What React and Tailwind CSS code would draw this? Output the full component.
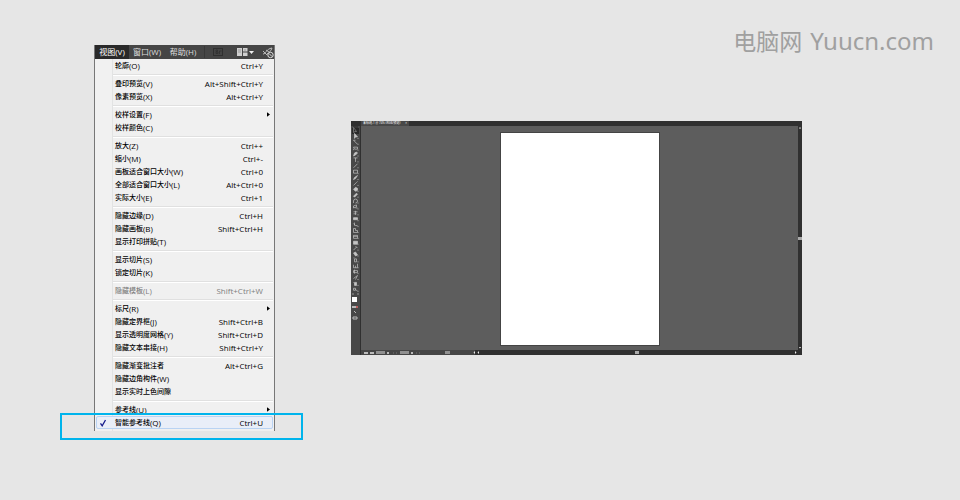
import React from 'react';

const groups = [
  [['轮廓', '(O)', 'Ctrl+Y']],
  [['叠印预览', '(V)', 'Alt+Shift+Ctrl+Y'], ['像素预览', '(X)', 'Alt+Ctrl+Y']],
  [['校样设置', '(F)', '', 'sub'], ['校样颜色', '(C)', '']],
  [
    ['放大', '(Z)', 'Ctrl++'],
    ['缩小', '(M)', 'Ctrl+-'],
    ['画板适合窗口大小', '(W)', 'Ctrl+0'],
    ['全部适合窗口大小', '(L)', 'Alt+Ctrl+0'],
    ['实际大小', '(E)', 'Ctrl+1'],
  ],
  [['隐藏边缘', '(D)', 'Ctrl+H'], ['隐藏画板', '(B)', 'Shift+Ctrl+H'], ['显示打印拼贴', '(T)', '']],
  [['显示切片', '(S)', ''], ['锁定切片', '(K)', '']],
  [['隐藏模板', '(L)', 'Shift+Ctrl+W', 'disabled']],
  [
    ['标尺', '(R)', '', 'sub'],
    ['隐藏定界框', '(J)', 'Shift+Ctrl+B'],
    ['显示透明度网格', '(Y)', 'Shift+Ctrl+D'],
    ['隐藏文本串接', '(H)', 'Shift+Ctrl+Y'],
  ],
  [['隐藏渐变批注者', '', 'Alt+Ctrl+G'], ['隐藏边角构件', '(W)', ''], ['显示实时上色间隙', '', '']],
  [['参考线', '(U)', '', 'sub'], ['智能参考线', '(Q)', 'Ctrl+U', 'checked']],
];

function MenuItem({ label, mnemonic, shortcut, kind }) {
  const checked = kind === 'checked';
  return (
    <button
      type="button"
      disabled={kind === 'disabled'}
      className={`flex h-[13px] w-full items-center whitespace-nowrap text-left text-[8px] leading-[13px] ${
        kind === 'disabled' ? 'text-[#808080]' : 'text-black'
      } ${checked ? 'rounded-[2px] bg-[#e9eef8] outline outline-1 -outline-offset-1 outline-[#b9d3f3]' : ''}`}
    >
      <span className="w-[19px] pl-[3px]">
        {checked && (
          <svg viewBox="0 0 8 8" className="size-2" fill="none" stroke="#151b8c" strokeWidth="1.3">
            <path d="M1.5 4.3 3.2 6.8 6.5 1" />
          </svg>
        )}
      </span>
      <span className="flex grow">
        <span className="text-[7px] font-medium">{label}</span>
        <span>{mnemonic}</span>
      </span>
      <span>{shortcut}</span>
      <span className="flex w-[10px] justify-center">
        {kind === 'sub' && (
          <svg viewBox="0 0 4 6" className="h-[5px] w-[3px]" fill="#000">
            <path d="M0 0 4 3 0 6Z" />
          </svg>
        )}
      </span>
    </button>
  );
}

function ViewMenu() {
  return (
    <section className="relative w-[181px] shrink-0 border-x border-[#777]">
      <nav className="flex h-[14px] items-center bg-[#454545] text-[8px] leading-[14px] text-[#dedede]">
        <button type="button" className="h-full w-[34px] whitespace-nowrap bg-[#292929] text-white">视图(V)</button>
        <button type="button" className="h-full w-[36px] whitespace-nowrap">窗口(W)</button>
        <button type="button" className="h-full w-[36px] whitespace-nowrap">帮助(H)</button>
        <svg viewBox="0 0 73 14" className="h-[14px] w-[73px]" fill="none">
          <path d="M3.5 1v12" stroke="#383838" />
          <rect x="12.5" y="3.5" width="9" height="7" stroke="#303030" />
          <path d="M15 5h1.500v1.500H15zM15 7h2v1.500h-2zM18.500 9V6h2" stroke="#303030" strokeWidth=".8" />
          <path d="M36 3h5v8h-5zM42 3h4.500v3.500h-4.500zM42 7.500h4.500v3.500h-4.500z" fill="#d0d0d0" />
          <path d="M37 5h3M37 7h3M43 5h2" stroke="#777" strokeWidth=".6" />
          <path d="M48 6h5l-2.500 3z" fill="#eee" />
          <path d="M62 9c3 0 3-5 9-6-1 3-3 5-5 6M62 6l4 4M65 5l3 2" stroke="#bbb" />
          <circle cx="69.500" cy="10" r="2.700" fill="#444" stroke="#ddd" />
          <path d="m68 8.500 3 3" stroke="#ddd" />
        </svg>
      </nav>
      <div className="bg-[linear-gradient(90deg,#f1f1f1_17px,#e2e3e3_17px,#e2e3e3_18px,#f0f0f0_18px)] px-px pb-[2px]">
        {groups.map((items, i) => (
          <React.Fragment key={i}>
            {i > 0 && <hr className="my-[2px] ml-[17px] h-px border-0 bg-[#e0e0e0] shadow-[0_1px_0_#fff]" />}
            {items.map(([label, mnemonic, shortcut, kind]) => (
              <MenuItem key={label} label={label} mnemonic={mnemonic} shortcut={shortcut} kind={kind} />
            ))}
          </React.Fragment>
        ))}
      </div>
      <div className="pointer-events-none absolute -bottom-[9px] -left-[35px] h-[27px] w-[243px] border-2 border-[#00b4ec]" />
    </section>
  );
}

const tools = [
  'M1 0v5l1.500-1 1.500 0z', 'M2 0v5l1-1.500h2z', 'M1 1l4 4M1 1h2', 'M1 2h4v2H2zM1 4v1',
  'M1 5l1-3 2-1 1 1-2 2z', 'M1 1h4M3 1v4', 'M1 5l4-4', 'M1 1.500h4v3H1z',
  'M1 5l1-2 3-2-2 3z', 'M1 5l3-3 1-1', 'M1 3l2-2 2 1v2l-2 1z', 'M1 4l3-3 1 1-3 3z',
  'M1 3a2 2 0 1 1 2 2M1 3v2', 'M1 4V2l3-1v2zM3 4h2', 'M1 2h4M1 4h3M3 1v4', 'M1 2h4v2H1z',
  'M1 2l2 2 2 0M2 1v3', 'M1 1v4h4V3H3V1z', 'M1 2h4v3H1zM1 3h4', 'M1 2h4v3H1z',
  'M1 5l3-3M3 1l2 2', 'M1 2l2-1 2 3-2 1z', 'M2 2h2v3H2zM1 1h1', 'M1 5V2M3 5V3M5 5V1M1 5h4',
  'M1 2h4v2H1zM2 1v4', 'M1 4l4-3-2 4', 'M2 2h2v3H2zM1 2l1 1', 'M3 3l2 2M1 2h2v2H1z',
];
const filled = [1, 4, 8, 10, 11, 15, 19, 21, 26];

function Editor() {
  return (
    <section className="flex h-[234px] w-[451px] shrink-0 bg-[#333]">
      <aside className="flex w-[10px] flex-col items-center border-r border-[#303030] bg-[#484848]">
        <div className="h-[5px] w-full bg-[#303030]" />
        <svg viewBox="0 0 9 196" className="h-[196px] w-[9px]" fill="none">
          <path d="M2 1h5" stroke="#292929" />
          <rect x="1" y="2" width="7" height="6" fill="#292929" />
          {tools.map((d, i) => (
            <g key={i} transform={`translate(1.500 ${1.5 + i * 5.88})`}>
              <path d={d} stroke={i === 0 ? '#888' : '#c4c4c4'} strokeWidth=".7" fill={filled.includes(i) ? '#c4c4c4' : 'none'} />
              {i > 0 && <path d="M5 5h1" stroke="#aaa" />}
            </g>
          ))}
          <path d="M1 168h2M6 168h2" stroke="#999" />
          <rect x="1" y="171" width="5" height="5" fill="#fff" />
          <path d="M1 181h4" stroke="#ddd" strokeWidth="1.500" />
          <path d="M5 181h2" stroke="#d66" strokeWidth="1.500" />
          <path d="M3 185l2 2M2 191h4v2H2z" stroke="#bbb" />
        </svg>
      </aside>
      <div className="flex min-w-0 grow flex-col">
        <header className="flex h-[5px] bg-[#303030]">
          <div className="flex w-[48px] items-center justify-between overflow-hidden whitespace-nowrap bg-[#484848] px-[2px] text-[3px] leading-[5px] text-white">
            <span>未标题-1 @ 74% (RGB/预览)</span>
            <span>×</span>
          </div>
        </header>
        <div className="flex min-h-0 grow">
          <main className="flex grow justify-center bg-[#5d5d5d] pl-px pt-[6px]">
            <div className="h-[214px] w-[160px] border border-[#444] bg-white" />
          </main>
          <svg viewBox="0 0 4 224" className="h-[224px] w-[4px] bg-[#303030]">
            <path d="M1 2.500 2 1l1 1.500zM1 221h2l-1 1.500z" fill="#fff" />
            <path d="M0 111h4v3H0z" fill="#aaa" />
          </svg>
        </div>
        <footer className="h-[5px] bg-[#303030]">
          <svg viewBox="0 0 441 5" className="h-[5px] w-full" fill="none">
            <path d="M0 0h114v5H0z" fill="#454545" />
            <path d="M3 3h4M9 3h4M26 3h2M50 3h2" stroke="#bbb" strokeWidth="2" />
            <path d="M15 1h9v3h-9zM39 1h9v3h-9zM84 1h5v3h-5z" fill="#909090" />
            <path d="M32 3h1M35 3h1M55 3h1M58 3h1" stroke="#777" />
            <path d="M114 1v3l-1.500-1.500zM118 1v3l-1.500-1.500zM434 1v3l1.500-1.500z" fill="#eee" />
            <path d="M274 1h4v3h-4z" fill="#aaa" />
          </svg>
        </footer>
      </div>
    </section>
  );
}

export default function App() {
  return (
    <div className="min-h-screen overflow-hidden bg-[#e6e6e6] font-['Open_Sans','Noto_Sans_CJK_SC',sans-serif]">
      <div className="flex items-start pl-[94px] pr-[26px] pt-[26px]">
        <div className="flex items-start gap-[76px] pt-[19px]">
          <ViewMenu />
          <div className="w-[382px] pt-[76px]">
            <Editor />
          </div>
        </div>
        <h1 className="flex grow items-center justify-end gap-2 whitespace-nowrap font-['Noto_Sans','Noto_Sans_CJK_SC',sans-serif] text-2xl leading-[30px] text-[#a0a0a0]">
          <span className="text-[23px]">电脑网</span>
          <span>Yuucn.com</span>
        </h1>
      </div>
    </div>
  );
}
